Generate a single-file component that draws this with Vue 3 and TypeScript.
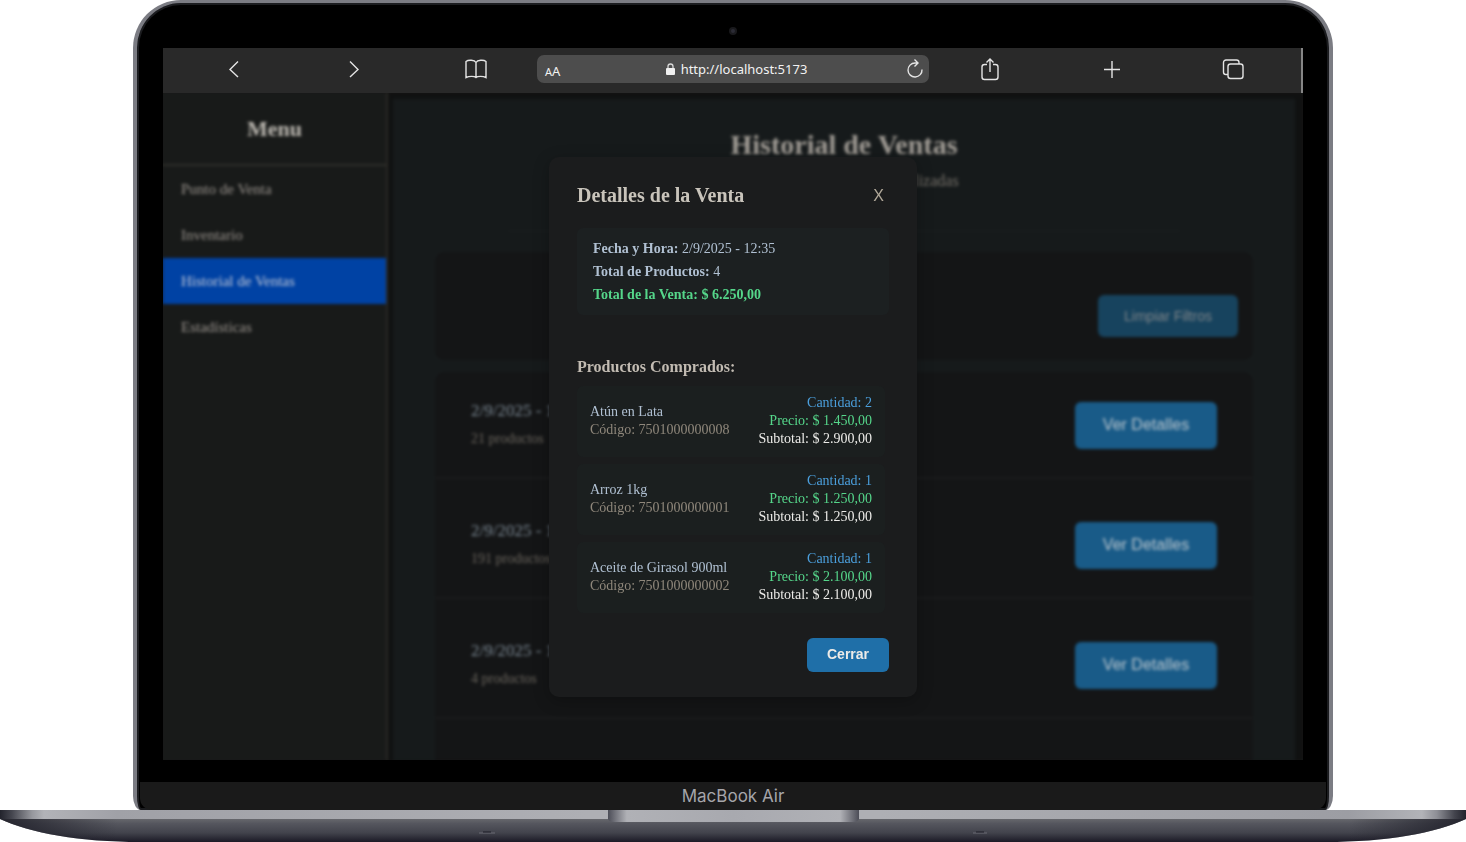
<script setup lang="ts">
import { ref } from 'vue'

interface Product {
  name: string
  code: string
  qty: number
  price: string
  subtotal: string
}

interface Sale {
  date: string
  items: string
}

const menu = ['Punto de Venta', 'Inventario', 'Historial de Ventas', 'Estadísticas']
const active = ref('Historial de Ventas')
const open = ref(true)

const sales: Sale[] = [
  { date: '2/9/2025 - 12:35', items: '21 productos' },
  { date: '2/9/2025 - 12:35', items: '191 productos' },
  { date: '2/9/2025 - 12:35', items: '4 productos' },
]

const products: Product[] = [
  { name: 'Atún en Lata', code: '7501000000008', qty: 2, price: '1.450,00', subtotal: '2.900,00' },
  { name: 'Arroz 1kg', code: '7501000000001', qty: 1, price: '1.250,00', subtotal: '1.250,00' },
  { name: 'Aceite de Girasol 900ml', code: '7501000000002', qty: 1, price: '2.100,00', subtotal: '2.100,00' },
]
</script>

<template>
  <div class="device">
    <div class="lid">
      <div class="bezel"><span class="camera"></span></div>
      <div class="screen">
        <header class="toolbar">
          <div class="tools">
            <button class="tool" aria-label="Atrás">
              <svg viewBox="0 0 24 24"><path d="M16 4.500 8 12.500l8 7.500" /></svg>
            </button>
            <button class="tool" aria-label="Adelante">
              <svg viewBox="0 0 24 24"><path d="m7 4.500 8 8-8 7.500" /></svg>
            </button>
            <button class="tool" aria-label="Marcadores">
              <svg viewBox="0 0 24 24">
                <path d="M12 5.500C10.500 3 4.500 2.500 2 4.500V20.500c3-1.500 8.500-1.500 10 0 1.500-1.500 7-1.500 10 0V4.500C19.500 2.500 13.500 3 12 5.500zm0 0v15" />
              </svg>
            </button>
          </div>
          <div class="address">
            <span class="aa"><small>A</small>A</span>
            <span class="url">
              <svg class="lock" viewBox="0 0 9 12">
                <path class="shackle" d="M2 6V3.500a2.500 2.500 0 0 1 5 0V6" />
                <rect y="5" width="9" height="7" rx="1" />
              </svg>
              http://localhost:5173
            </span>
            <button class="reload" aria-label="Recargar">
              <svg viewBox="0 0 18 20">
                <path d="M16 10.500A7 7 0 1 1 9 4h3M8.500 0.500 12 4 8.500 7.500" />
              </svg>
            </button>
          </div>
          <div class="tools right">
            <button class="tool" aria-label="Compartir">
              <svg viewBox="0 0 24 24">
                <path d="M9 7.500H6.500a2.500 2.500 0 0 0-2.500 2.500v10a2.500 2.500 0 0 0 2.500 2.500h11a2.500 2.500 0 0 0 2.500-2.500V10a2.500 2.500 0 0 0-2.500-2.500H15M12 15V2.500M8.500 5.500 12 2l3.500 3.500" />
              </svg>
            </button>
            <button class="tool" aria-label="Nueva pestaña">
              <svg viewBox="0 0 24 24"><path d="M12 4v17M4 12.500h16" /></svg>
            </button>
            <button class="tool" aria-label="Pestañas">
              <svg viewBox="0 0 24 24">
                <path d="M7 17.500H5A2.500 2.500 0 0 1 2.500 15V5.500A2.500 2.500 0 0 1 5 3h10.500A2.500 2.500 0 0 1 18 5.500V7" />
                <rect x="7" y="7" width="15" height="14.500" rx="2.500" />
              </svg>
            </button>
          </div>
        </header>

        <div class="page">
          <div class="app">
            <aside class="sidebar">
              <h2>Menu</h2>
              <nav>
                <a
                  v-for="m in menu"
                  :key="m"
                  href="#"
                  :class="{ active: m === active }"
                  @click.prevent="active = m"
                >{{ m }}</a>
              </nav>
            </aside>
            <main class="main">
              <div class="panel">
                <h1>Historial de Ventas</h1>
                <p class="subtitle">Consulta todas las ventas realizadas</p>
                <hr />
                <section class="filters">
                  <button class="clear">Limpiar Filtros</button>
                </section>
                <section class="list">
                  <article v-for="(s, i) in sales" :key="i" class="sale">
                    <div class="summary">
                      <div class="date">{{ s.date }}</div>
                      <div class="count">{{ s.items }}</div>
                    </div>
                    <button class="details" @click="open = true">Ver Detalles</button>
                  </article>
                </section>
              </div>
            </main>
          </div>

          <div v-if="open" class="overlay">
            <div class="modal" role="dialog" aria-labelledby="modal-title">
              <div class="modal-head">
                <h3 id="modal-title">Detalles de la Venta</h3>
                <button class="close" aria-label="Cerrar ventana" @click="open = false">X</button>
              </div>
              <div class="info">
                <p><strong>Fecha y Hora:</strong> 2/9/2025 - 12:35</p>
                <p><strong>Total de Productos:</strong> 4</p>
                <p class="total"><strong>Total de la Venta: $ 6.250,00</strong></p>
              </div>
              <h4>Productos Comprados:</h4>
              <ul class="products">
                <li v-for="p in products" :key="p.code">
                  <div>
                    <div class="name">{{ p.name }}</div>
                    <div class="code">Código: {{ p.code }}</div>
                  </div>
                  <div class="amounts">
                    <div class="qty">Cantidad: {{ p.qty }}</div>
                    <div class="price">Precio: $ {{ p.price }}</div>
                    <div class="sub">Subtotal: $ {{ p.subtotal }}</div>
                  </div>
                </li>
              </ul>
              <div class="modal-foot">
                <button class="ok" @click="open = false">Cerrar</button>
              </div>
            </div>
          </div>
        </div>
      </div>
      <div class="chin">MacBook Air</div>
    </div>

    <svg class="base" viewBox="0 0 1466 32" preserveAspectRatio="none" aria-hidden="true">
      <defs>
        <linearGradient id="deck" x1="0" x2="1" y1="0" y2="0">
          <stop offset="0" stop-color="#22232c" />
          <stop offset=".008" stop-color="#44454e" />
          <stop offset=".022" stop-color="#97989e" />
          <stop offset=".03" stop-color="#b2b3b8" />
          <stop offset=".08" stop-color="#a0a1a7" />
          <stop offset=".4" stop-color="#aeafb4" />
          <stop offset=".6" stop-color="#aeafb4" />
          <stop offset=".92" stop-color="#9c9da3" />
          <stop offset=".97" stop-color="#b2b3b8" />
          <stop offset=".98" stop-color="#8e8f96" />
          <stop offset=".992" stop-color="#44454e" />
          <stop offset="1" stop-color="#22232c" />
        </linearGradient>
        <linearGradient id="under" x1="0" x2="0" y1="0" y2="1">
          <stop offset="0" stop-color="#66676c" />
          <stop offset=".2" stop-color="#55565e" />
          <stop offset=".6" stop-color="#42434c" />
          <stop offset="1" stop-color="#1b1a26" />
        </linearGradient>
        <linearGradient id="edge" x1="0" x2="1" y1="0" y2="0">
          <stop offset="0" stop-color="#1e1e28" stop-opacity=".9" />
          <stop offset=".08" stop-color="#1e1e28" stop-opacity="0" />
          <stop offset=".92" stop-color="#1e1e28" stop-opacity="0" />
          <stop offset="1" stop-color="#1e1e28" stop-opacity=".9" />
        </linearGradient>
        <linearGradient id="notch" x1="0" x2="1" y1="0" y2="0">
          <stop offset="0" stop-color="#4c4d57" />
          <stop offset=".03" stop-color="#74757d" />
          <stop offset=".075" stop-color="#b0b1b6" />
          <stop offset=".5" stop-color="#a8a9af" />
          <stop offset=".925" stop-color="#b0b1b6" />
          <stop offset=".97" stop-color="#74757d" />
          <stop offset="1" stop-color="#4c4d57" />
        </linearGradient>
      </defs>
      <path d="M0 9C30 23 80 32 140 32H1326C1386 32 1436 23 1466 9z" fill="url(#under)" />
      <path d="M0 9C30 23 80 32 140 32H1326C1386 32 1436 23 1466 9z" fill="url(#edge)" />
      <rect width="1466" height="9" fill="url(#deck)" />
      <path d="M608 0H859V9Q858 12 852 12H615Q609 12 608 9z" fill="url(#notch)" />
      <path d="M479 23h16M973 23h14" stroke="#6a6b74" />
      <path d="M483 22h8M976 22h8" stroke="#1c1c26" />
    </svg>
  </div>
</template>

<style>
body {
  background: #fff;
}
</style>

<style scoped>
* {
  box-sizing: border-box;
}
h1, h2, h3, h4, p, ul {
  margin: 0;
  padding: 0;
}
button {
  border: 0;
  cursor: pointer;
}
.device {
  display: flex;
  flex-direction: column;
  height: 100vh;
  min-height: 740px;
  overflow: hidden;
  font-family: "Liberation Serif", "Times New Roman", serif;
}
.lid {
  flex: 1;
  min-height: 0;
  display: flex;
  flex-direction: column;
  margin: 0 133px;
  background: #000;
  border: 4px solid #7b7c83;
  border-top-width: 3px;
  border-bottom: 0;
  border-radius: 48px 48px 8px 8px / 48px 48px 14px 14px;
  box-shadow: inset 0 0 0 2px #1b1c1f;
}
.bezel {
  height: 45px;
  display: flex;
  justify-content: center;
  align-items: center;
  padding-top: 11px;
}
.camera {
  width: 8px;
  height: 8px;
  border: 2px solid #19191c;
  border-radius: 50%;
  background: #2b2b35;
}
.screen {
  flex: 1;
  min-height: 0;
  display: flex;
  flex-direction: column;
  margin: 0 26px;
}
.toolbar {
  height: 45px;
  flex: none;
  display: grid;
  grid-template-columns: 1fr 392px 1fr;
  align-items: center;
  background: #292929;
  box-shadow: inset -2px 0 #868686;
  padding-bottom: 3px;
}
.tools {
  display: flex;
  justify-content: space-between;
  padding: 0 49px 0 59px;
}
.tools.right {
  padding: 0 58px 0 49px;
}
.tool {
  width: 24px;
  height: 24px;
  padding: 0;
  background: none;
}
.tool svg, .reload svg {
  display: block;
  width: 100%;
  height: 100%;
  fill: none;
  stroke: #e4e4e4;
  stroke-width: 1.400;
}
.address {
  display: grid;
  grid-template-columns: 32px 1fr 28px;
  align-items: center;
  height: 28px;
  padding: 0 5px 0 8px;
  border-radius: 7px;
  background: #4d4d4d;
  color: #f2f2f2;
  font-family: "Noto Sans", "Open Sans", sans-serif;
  font-size: 13px;
}
.aa {
  padding-top: 4px;
}
.aa small {
  font-size: 11px;
}
.url {
  display: flex;
  justify-content: center;
  align-items: center;
  gap: 6px;
}
.lock {
  width: 9px;
  height: 12px;
  fill: #f0f0f0;
}
.shackle {
  fill: none;
  stroke: #d8d8d8;
  stroke-width: 1.300;
}
.reload {
  justify-self: end;
  width: 18px;
  height: 20px;
  padding: 0;
  background: none;
}
.page {
  position: relative;
  flex: 1;
  min-height: 0;
  overflow: hidden;
  background: #181a19;
}
.app {
  display: flex;
  height: 100%;
  filter: blur(1px);
}
.sidebar {
  flex: none;
  width: 225px;
  background: #181a19;
  border-right: 2px solid #2b2926;
}
.sidebar h2 {
  height: 73px;
  border-bottom: 2px solid #2f2e2b;
  color: #bfbbb4;
  font-size: 22px;
  line-height: 71px;
  text-align: center;
}
.sidebar a {
  display: block;
  padding: 0 18px;
  color: #9c9690;
  font-size: 15px;
  line-height: 46px;
  text-decoration: none;
}
.sidebar a.active {
  background: #0042a4;
  color: #c4cad8;
}
.main {
  flex: 1;
  min-width: 0;
  display: flex;
  padding: 6px 8px 0 5px;
  background: #101111;
}
.panel {
  flex: 1;
  display: flex;
  flex-direction: column;
  padding: 29px 42px 0;
  background: #161a1b;
}
h1 {
  color: #a39e97;
  font-size: 28px;
  line-height: 34px;
  text-align: center;
}
.subtitle {
  margin-top: 10px;
  color: #77726b;
  font-size: 16px;
  line-height: 18px;
  text-align: center;
}
hr {
  width: 82%;
  height: 2px;
  margin: 40px auto 20px;
  border: 0;
  background: #191c1d;
}
.filters {
  flex: none;
  display: flex;
  justify-content: flex-end;
  height: 108px;
  padding: 43px 15px 0;
  border-radius: 10px;
  background: #141516;
}
.clear, .details {
  color: #bcc7ce;
  background: #195b88;
  border-radius: 6px;
  font-family: "Liberation Sans", Arial, sans-serif;
}
.clear {
  width: 140px;
  height: 42px;
  color: #80868a;
  background: #17435e;
  font-size: 14px;
}
.details {
  width: 142px;
  height: 47px;
  font-size: 16px;
  padding-bottom: 3px;
}
.list {
  flex: 1;
  min-height: 0;
  display: flex;
  flex-direction: column;
  gap: 13px;
  margin-top: 12px;
  border-radius: 10px 10px 0 0;
  background: #141516;
}
.sale {
  flex: none;
  display: flex;
  justify-content: space-between;
  align-items: center;
  height: 107px;
  padding: 2px 36px 0;
  border-bottom: 2px solid #1b1c1d;
}
.summary {
  padding-bottom: 2px;
}
.date {
  color: #7b8893;
  font-size: 17px;
  line-height: 28px;
}
.count {
  color: #6c675f;
  font-size: 14px;
  line-height: 28px;
}
.overlay {
  position: absolute;
  inset: 0;
  display: grid;
  place-items: center;
  backdrop-filter: blur(1px);
}
.modal {
  width: 368px;
  padding: 26px 28px 25px;
  border-radius: 10px;
  background: #1b1c1d;
  box-shadow: 0 4px 16px rgba(0, 0, 0, .25);
}
.modal-head {
  display: flex;
  justify-content: space-between;
  align-items: center;
  height: 24px;
  margin-bottom: 21px;
}
h3 {
  color: #c9c4bb;
  font-size: 20px;
  line-height: 24px;
}
.close {
  padding: 2px 5px 0;
  background: none;
  color: #b0a899;
  font: 16px/21px "Liberation Sans", Arial, sans-serif;
}
.info {
  padding: 9px 16px;
  border-radius: 6px;
  background: #1c2021;
  color: #b0c0d2;
  font-size: 14px;
  line-height: 23px;
}
.total {
  color: #55d68a;
}
h4 {
  margin: 42px 0 9px;
  color: #c2bbb2;
  font-size: 16px;
  line-height: 20px;
}
.products {
  display: grid;
  gap: 7px;
  margin-right: 4px;
  list-style: none;
  font-size: 14px;
  line-height: 18px;
}
.products li {
  display: flex;
  justify-content: space-between;
  align-items: center;
  padding: 8px 13px 9px;
  border-radius: 6px;
  background: #1b1f1f;
}
.name {
  color: #b0c0d2;
}
.code {
  color: #8f877b;
}
.amounts {
  text-align: right;
}
.qty {
  color: #4b9fdc;
}
.price {
  color: #55d68a;
}
.sub {
  color: #ecebe8;
}
.modal-foot {
  display: flex;
  justify-content: flex-end;
  margin-top: 25px;
}
.ok {
  width: 82px;
  height: 34px;
  padding-bottom: 3px;
  border-radius: 6px;
  background: #1f6fa8;
  color: #ecebe8;
  font: bold 14px "Liberation Sans", Arial, sans-serif;
}
.chin {
  height: 28px;
  flex: none;
  margin: 22px 3px 0;
  border-radius: 0 0 12px 12px;
  background: #1a1a1a;
  color: #a5a5aa;
  font: 17px/29px Inter, "Liberation Sans", sans-serif;
  text-align: center;
}
.base {
  display: block;
  flex: none;
  width: 100%;
  height: 32px;
}
</style>
